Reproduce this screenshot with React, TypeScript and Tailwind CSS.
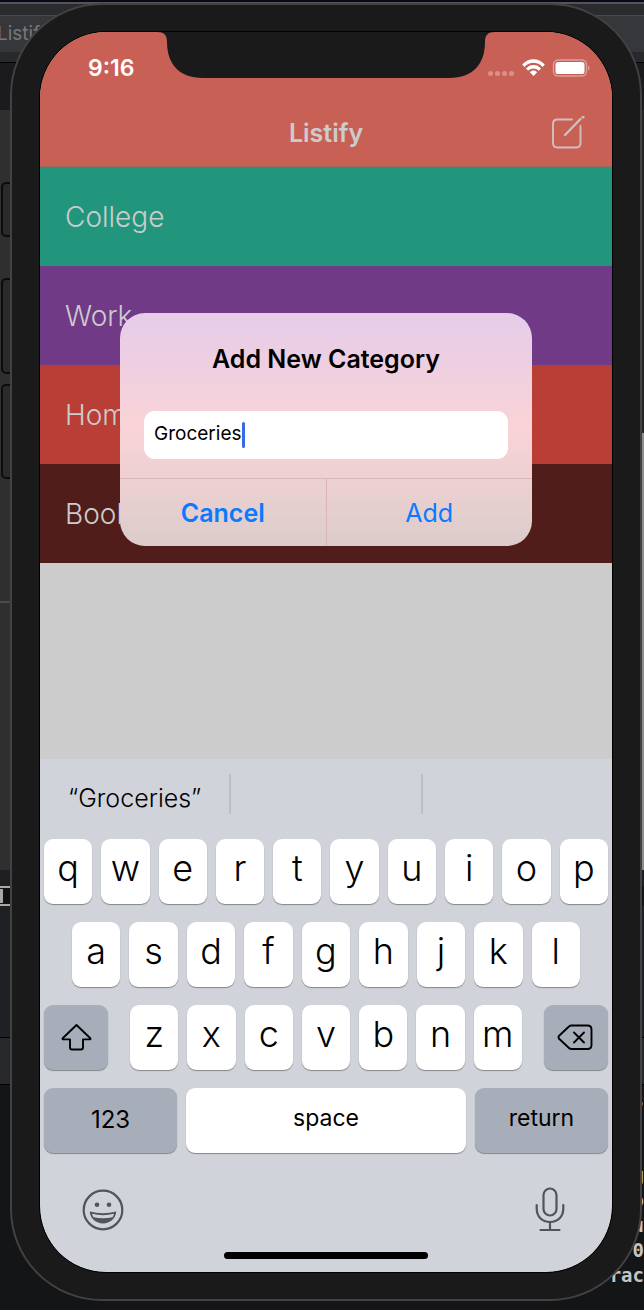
import React from "react";

const categories = [
  { name: "College", color: "bg-[#22967d]" },
  { name: "Work", color: "bg-[#703a87]" },
  { name: "Home", color: "bg-[#b93f36]" },
  { name: "Books", color: "bg-[#501d1b]" },
];

const topKeys = ["q", "w", "e", "r", "t", "y", "u", "i", "o", "p"];
const homeKeys = ["a", "s", "d", "f", "g", "h", "j", "k", "l"];
const bottomKeys = ["z", "x", "c", "v", "b", "n", "m"];

const consoleLines = ["s", ".", ":", "g", "o", "u", "0", "rac"];

function Desktop() {
  return (
    <div aria-hidden="true" className="absolute inset-0 flex flex-col overflow-hidden bg-[#131416]">
      <div className="h-[2px] shrink-0 bg-[#080818]" />
      <div className="h-[2px] shrink-0 bg-[#555557]" />
      <div className="h-[11px] shrink-0 bg-[#2a2b2f]" />
      <div className="flex h-[37px] shrink-0 items-center border-t border-[#48494c] bg-[#36373b] text-[19px] text-[#77787a]">
        <span className="-ml-[3px]">Listify</span>
      </div>
      <div className="h-[11px] shrink-0 border-b border-black bg-[#28292c]" />
      <div className="h-[47px] shrink-0 bg-[#1b1b1e]" />
      <div className="flex h-[760px] shrink-0 justify-between bg-[#2f2f2f]">
        <div className="h-[493px] w-[12px] border-b-2 border-[#4a4a4a] bg-[#2f2f2f]" />
        <div className="flex w-[12px] flex-col">
          <div className="h-[323px] bg-[#262626]" />
          <div className="flex-1 bg-[#8d8d8d]" />
        </div>
      </div>
      <div className="h-[16px] shrink-0 bg-[#1e1f22]" />
      <div className="flex h-[20px] w-[12px] shrink-0 items-center border-y-2 border-[#a8a8a8] bg-[#111111]">
        <div className="h-[14px] w-[3px] bg-[#a8a8a8]" />
      </div>
      <div className="h-[131px] shrink-0 bg-[#1e2023]" />
      <div className="h-[48px] shrink-0 border-y border-black bg-[#27282a]" />
      <div className="flex flex-1 flex-col items-end justify-end bg-[#141517] pb-[22px] font-['DejaVu_Sans_Mono',monospace] text-[19px] leading-[25px] font-bold text-[#c4c4c4]">
        {consoleLines.map((line, i) => (
          <span key={i}>{line}</span>
        ))}
      </div>
    </div>
  );
}

function Notch() {
  return (
    <svg
      aria-hidden="true"
      viewBox="0 0 338 47"
      className="absolute -top-px left-1/2 h-[47px] w-[338px] -translate-x-1/2 fill-[#1a1a1a]"
    >
      <path d="M0 0V1C7 1 10 4 10 11C10 33 22 47 46 47H292C316 47 328 33 328 11C328 4 331 1 338 1V0Z" />
    </svg>
  );
}

function StatusIcons() {
  return (
    <svg aria-hidden="true" viewBox="0 0 104 20" className="h-[20px] w-[104px]" fill="#fff">
      <g fillOpacity="0.3">
        <circle cx="4.5" cy="15.5" r="2.5" />
        <circle cx="11.5" cy="15.5" r="2.5" />
        <circle cx="18.5" cy="15.5" r="2.5" />
        <circle cx="25.5" cy="15.5" r="2.5" />
      </g>
      <path d="M36.2 6.6C42.6 -0.6 52.4 -0.6 58.8 6.6L56.6 8.9C51.4 3.3 43.6 3.3 38.4 8.9Z" />
      <path d="M40 10.5C44.3 5.9 50.7 5.9 55 10.5L52.8 12.8C49.8 9.8 45.2 9.8 42.2 12.8Z" />
      <path d="M43.8 14.3C46 12 49 12 51.2 14.3L47.5 18Z" />
      <rect x="67.500" y="2" width="33" height="16" rx="4.5" fill="none" stroke="#fff" strokeOpacity="0.4" strokeWidth="1.4" />
      <rect x="69.500" y="4" width="29" height="12" rx="2.6" />
      <path d="M102.100 7.4C104 8.4 104 11.6 102.100 12.6Z" fillOpacity="0.45" />
    </svg>
  );
}

function Key({ children, className = "" }: { children: React.ReactNode; className?: string }) {
  return (
    <button
      type="button"
      className={
        "flex h-[65px] min-w-0 items-center justify-center rounded-[9px] shadow-[0_1px_1px_#85878a] " + className
      }
    >
      {children}
    </button>
  );
}

function LetterKey({ letter }: { letter: string }) {
  return (
    <Key className="flex-1 bg-white pb-[7px] text-[36px] leading-none font-[350]">{letter}</Key>
  );
}

function Keyboard() {
  return (
    <section aria-label="Keyboard" className="flex flex-col bg-[#d0d3da] text-black">
      <div className="flex h-[80px] items-start pt-[15px]">
        <button type="button" className="h-[40px] flex-1 border-r-2 border-[#bcbfc5] pt-[9px] text-[25px] leading-none font-[350]">
          “Groceries”
        </button>
        <div className="h-[40px] flex-1 border-r-2 border-[#bcbfc5]" />
        <div className="flex-1" />
      </div>
      <div className="flex flex-col gap-[18px] px-1">
        <div className="flex gap-[9px]">
          {topKeys.map((k) => (
            <LetterKey key={k} letter={k} />
          ))}
        </div>
        <div className="flex gap-[9px] px-7">
          {homeKeys.map((k) => (
            <LetterKey key={k} letter={k} />
          ))}
        </div>
        <div className="flex gap-[22px]">
          <Key className="w-[64px] bg-[#a8aeb9]">
            <svg role="img" aria-label="Shift" viewBox="0 0 32 30" className="h-[30px] w-[32px]" fill="none" stroke="#000" strokeWidth="1.9" strokeLinejoin="round">
              <path d="M16.500 2L2.700 15.200Q2.100 16.400 3.500 16.400H10V24.500Q10 26.500 12 26.500H21Q23 26.500 23 24.500V16.400H29.500Q30.900 16.400 30.300 15.200Z" />
            </svg>
          </Key>
          <div className="flex flex-1 gap-[9px]">
            {bottomKeys.map((k) => (
              <LetterKey key={k} letter={k} />
            ))}
          </div>
          <Key className="w-[64px] bg-[#a8aeb9]">
            <svg role="img" aria-label="Delete" viewBox="0 0 38 28" className="h-[28px] w-[38px]" fill="none" stroke="#000" strokeWidth="1.9" strokeLinejoin="round" strokeLinecap="round">
              <path d="M14.500 1.500H30.500Q34.500 1.500 34.500 5.500V21Q34.500 25 30.500 25H14.500Q13 25 12 24L2.100 14.800Q0.900 13.300 2.100 11.800L12 2.500Q13 1.500 14.500 1.500Z" />
              <path d="M17 8.500L27 18.500M27 8.500L17 18.500" />
            </svg>
          </Key>
        </div>
        <div className="flex gap-[9px]">
          <Key className="w-[133px] bg-[#a8aeb9] pb-px text-[24px]">123</Key>
          <Key className="flex-1 bg-white pb-1 text-[23px]">space</Key>
          <Key className="w-[133px] bg-[#a8aeb9] pb-1 text-[23px]">return</Key>
        </div>
      </div>
      <div className="flex items-center justify-between px-[42px] pt-[34px]">
        <button type="button" aria-label="Emoji">
          <svg viewBox="0 0 42 42" className="h-[42px] w-[42px]" fill="none" stroke="#50545b" strokeWidth="2.2">
            <circle cx="21" cy="21" r="19.300" />
            <circle cx="15" cy="15.800" r="2.300" fill="#50545b" stroke="none" />
            <circle cx="27" cy="15.800" r="2.300" fill="#50545b" stroke="none" />
            <path d="M7.700 22.600Q21 26 34.300 22.600C33.500 30 28 34.500 21 34.500C14 34.500 8.500 30 7.700 22.600Z" fill="#50545b" stroke="none" />
            <path d="M10 24.700Q21 27.600 32 24.700Q31.500 27.200 30.300 28.200Q21 30.500 11.700 28.200Q10.500 27.200 10 24.700Z" fill="#d0d3da" stroke="none" />
          </svg>
        </button>
        <button type="button" aria-label="Dictate" className="mr-1">
          <svg viewBox="0 0 32 46" className="h-[46px] w-[32px]" fill="none" stroke="#50545b" strokeWidth="2.200" strokeLinecap="round">
            <rect x="9.500" y="1.500" width="13" height="27" rx="6.500" />
            <path d="M2.700 18V21.500C2.700 29.500 8 35 16 35C24 35 29.300 29.500 29.300 21.500V18M16 35V43M6.500 43H25.500" />
          </svg>
        </button>
      </div>
      <div className="flex justify-center pt-[19px] pb-[13px]">
        <div className="h-[7px] w-[204px] rounded-full bg-black" />
      </div>
    </section>
  );
}

function AddCategoryDialog() {
  return (
    <div
      role="dialog"
      aria-labelledby="dialog-title"
      className="flex w-[412px] flex-col overflow-hidden rounded-[25px] bg-linear-to-b from-[#e6cce9] via-[#f9d3d7] to-[#dccccb]"
    >
      <h2 id="dialog-title" className="pt-[30px] text-center text-[25px] leading-[32px] font-semibold text-black">
        Add New Category
      </h2>
      <label className="mx-6 mt-[36px] mb-[19px] flex h-[48px] cursor-text items-center rounded-[11px] bg-white pl-[10px]">
        <input
          aria-label="Category name"
          defaultValue="Groceries"
          className="min-w-0 bg-transparent p-0 text-[19px] text-black caret-transparent outline-none [field-sizing:content]"
        />
        <span aria-hidden="true" className="h-[26px] w-[3px] rounded-full bg-[#3a68e8]" />
      </label>
      <div className="flex h-[68px] border-t border-[#dcb3b7] text-[25px] text-[#0a7aff]">
        <button type="button" className="flex-1 border-r border-[#dcb3b7] pt-[3px] font-semibold">
          Cancel
        </button>
        <button type="button" className="flex-1 pt-[3px]">
          Add
        </button>
      </div>
    </div>
  );
}

export default function App() {
  return (
    <div className="relative flex min-h-screen flex-col bg-[#131416] font-['Inter','Liberation_Sans',sans-serif]">
      <Desktop />
      <div aria-hidden="true" className="absolute top-[182px] left-[1px] flex flex-col">
        <div className="h-[55px] w-[14px] rounded-[5px] border-2 border-[#0c0c0c] bg-[#2a2a2a]" />
        <div className="mt-[41px] h-[96px] w-[14px] rounded-[5px] border-2 border-[#0c0c0c] bg-[#2a2a2a]" />
        <div className="mt-[10px] h-[95px] w-[14px] rounded-[5px] border-2 border-[#0c0c0c] bg-[#2a2a2a]" />
      </div>
      <main className="relative mt-[3px] mr-[2px] mb-[9px] ml-[10px] flex flex-1 flex-col rounded-[92px] border-2 border-[#424244] bg-[#1a1a1a] px-7 py-[27px]">
        <div className="relative flex flex-1 flex-col overflow-hidden rounded-[66px] bg-[#cccccc] outline outline-black">
          <div className="relative flex flex-1 flex-col">
            <header className="bg-[#c96056]">
              <div className="flex h-[69px] items-center justify-between pt-[3px] pr-[22px] pl-[48px]">
                <span className="text-[23px] leading-none font-semibold text-white">9:16</span>
                <StatusIcons />
              </div>
              <div className="grid h-[66px] grid-cols-[1fr_auto_1fr] items-center border-b border-[#a26a5c] px-[26px]">
                <span />
                <h1 className="text-[25px] leading-none font-semibold text-[#cccccc]">Listify</h1>
                <button type="button" aria-label="New category" className="justify-self-end">
                  <svg viewBox="0 2 36 36" className="h-[36px] w-[36px]" fill="none" stroke="#d0c0bd" strokeWidth="1.900" strokeLinecap="round" strokeLinejoin="round">
                    <path d="M22 5.500H7.500Q3 5.500 3 10V29Q3 33.500 7.500 33.500H26Q30.500 33.500 30.500 29V12" />
                    <path d="M15 21L30.500 5" strokeWidth="2.400" />
                    <path d="M33 2.900L33.100 2.800" strokeWidth="3" />
                  </svg>
                </button>
              </div>
            </header>
            <ul>
              {categories.map((c) => (
                <li key={c.name} className={"flex h-[99px] items-center px-[25px] text-[28px] leading-none font-[350] text-[#cccccc] " + c.color}>
                  {c.name}
                </li>
              ))}
            </ul>
            <div className="absolute inset-0 flex items-center justify-center pt-[67px]">
              <AddCategoryDialog />
            </div>
          </div>
          <Keyboard />
          <Notch />
        </div>
      </main>
    </div>
  );
}
